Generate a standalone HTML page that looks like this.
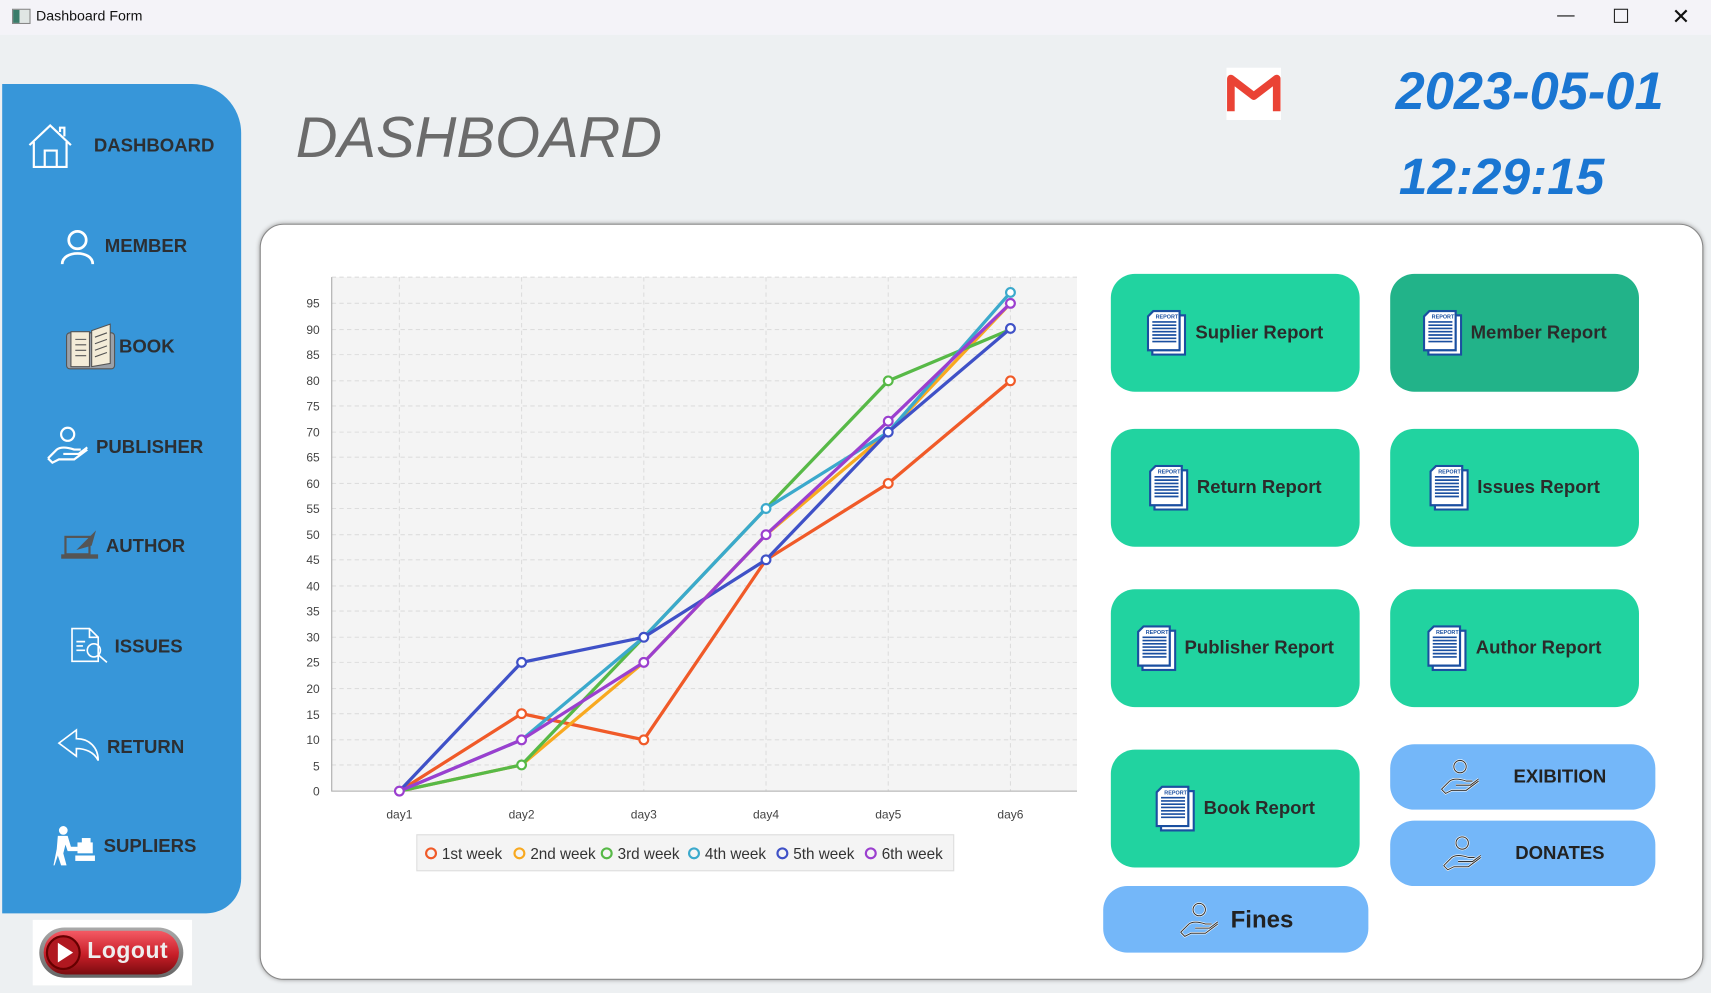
<!DOCTYPE html>
<html><head><meta charset="utf-8"><style>
html,body{margin:0;padding:0;width:1711px;height:993px;overflow:hidden;background:#edf0f2;font-family:"Liberation Sans",sans-serif}
#w{position:absolute;left:0;top:0;width:1568px;height:910px;transform:scale(1.09120);transform-origin:0 0;background:#edf0f2}
.a{position:absolute}
.tb{left:0;top:0;width:1568px;height:32px;background:#f4f3f8;font-size:13px;color:#111}
.side{left:2px;top:77px;width:219px;height:760px;background:#3796d9;border-radius:0 45px 32px 0}
.nav{position:absolute;font-weight:bold;font-size:17px;color:#2c2f33}
.btn{position:absolute;width:228px;height:108px;border-radius:22px;background:#21d3a0;font-weight:bold;font-size:17px;color:#2b2b2b;display:flex;align-items:center;justify-content:center;gap:8px}
.bb{position:absolute;width:243px;height:60px;border-radius:22px;background:#74b7f9;font-weight:bold;font-size:17px;color:#222;display:flex;align-items:center;justify-content:center;gap:30px}
</style></head><body><div id="w">
<div class="a tb"><div class="a" style="left:11px;top:8px;width:15px;height:12px;border:1px solid #888;background:linear-gradient(90deg,#3a7c6a 40%,#e0e6e4 40%)"></div><div class="a" style="left:33px;top:7px">Dashboard Form</div>
<div class="a" style="left:1427px;top:6px;font-size:16px">&#8212;</div><div class="a" style="left:1479px;top:8px;width:11px;height:11px;border:1.3px solid #222"></div><div class="a" style="left:1532px;top:3px;font-size:20px">&#10005;</div></div>

<div class="a side"></div>
<svg class="a" style="left:24px;top:111px" width="44" height="44" viewBox="0 0 44 44" fill="none" stroke="#fff" stroke-width="2"><path d="M3 22 L22 4 L41 22 M7 19 V42 H37 V19 M17 42 V27 H28 V42 M31 10 V6 H35 V14"/></svg>
<div class="nav" style="left:86px;top:124px">DASHBOARD</div>
<svg class="a" style="left:55px;top:209px" width="32" height="34" viewBox="0 0 32 34" fill="none" stroke="#fff" stroke-width="2.5"><circle cx="16" cy="11" r="8"/><path d="M2 33 C2 20 30 20 30 33"/></svg>
<div class="nav" style="left:96px;top:216px">MEMBER</div>
<svg class="a" style="left:60px;top:295px" width="46" height="46" viewBox="0 0 46 46"><rect x="1" y="10" width="44" height="33" rx="3" fill="#9aa0a8" stroke="#555"/><path d="M5 9 H22 V41 H5Z" fill="#f3ecd8" stroke="#555"/><path d="M24 8 L41 2 V38 L24 41Z" fill="#f3ecd8" stroke="#555"/><g stroke="#555"><path d="M9 16H19M9 21H19M9 26H19M9 31H19M27 14L38 10M27 20L38 16M27 26L38 22M27 32L38 28"/></g></svg>
<div class="nav" style="left:109px;top:308px">BOOK</div>
<svg class="a" style="left:42px;top:390px" width="40" height="36" viewBox="0 0 40 36" fill="none" stroke="#fff" stroke-width="2"><circle cx="20" cy="8" r="6"/><path d="M2 30 L10 22 C14 19 20 20 26 22 H32 M16 26 H30 L38 20 M2 30 L6 34 L12 31 H26 L38 22"/></svg>
<div class="nav" style="left:88px;top:400px">PUBLISHER</div>
<svg class="a" style="left:56px;top:484px" width="34" height="30" viewBox="0 0 34 30"><rect x="4" y="8" width="22" height="16" fill="none" stroke="#555" stroke-width="2"/><rect x="0" y="24" width="34" height="4" fill="#555"/><path d="M14 20 L32 2 L28 16Z" fill="#555"/></svg>
<div class="nav" style="left:97px;top:491px">AUTHOR</div>
<svg class="a" style="left:64px;top:574px" width="36" height="36" viewBox="0 0 36 36" fill="none" stroke="#fff" stroke-width="1.5"><path d="M2 2 H18 L26 10 V32 H2Z M18 2 V10 H26 M6 14 H14 M6 18 H12 M6 22 H14"/><circle cx="22" cy="22" r="6"/><path d="M26 26 L34 33"/></svg>
<div class="nav" style="left:105px;top:583px">ISSUES</div>
<svg class="a" style="left:52px;top:667px" width="40" height="32" viewBox="0 0 40 32" fill="none" stroke="#fff" stroke-width="1.5"><path d="M2 14 L18 2 V10 C30 10 38 18 38 30 C34 22 26 19 18 19 V26Z"/></svg>
<div class="nav" style="left:98px;top:675px">RETURN</div>
<svg class="a" style="left:49px;top:756px" width="40" height="38" viewBox="0 0 40 38" fill="#fff"><circle cx="9" cy="5" r="4"/><path d="M4 10 H13 L16 20 H22 V24 H13 L11 18 L9 26 L12 37 H7 L4 28 L1 37 H0 L3 22Z"/><rect x="22" y="16" width="14" height="10"/><rect x="26" y="12" width="8" height="6"/><rect x="20" y="28" width="18" height="5"/></svg>
<div class="nav" style="left:95px;top:766px">SUPLIERS</div>

<div class="a" style="left:30px;top:843px;width:146px;height:60px;background:#fff"></div>
<div class="a" style="left:36px;top:850px;width:132px;height:46px;border-radius:24px;background:linear-gradient(#aaa,#666);"></div>
<div class="a" style="left:40px;top:853px;width:124px;height:40px;border-radius:20px;background:linear-gradient(#f45a64,#c81e28 55%,#7a0c10)"></div>
<svg class="a" style="left:40px;top:855px" width="36" height="36" viewBox="0 0 36 36"><circle cx="18" cy="18" r="15" fill="#b01820" stroke="#600" stroke-width="2"/><path d="M13 9 L27 18 L13 27Z" fill="#fff"/></svg>
<div class="a" style="left:80px;top:860px;font-size:21px;font-weight:bold;color:#eee;letter-spacing:0.5px">Logout</div>

<div class="a" style="left:271px;top:96px;font-size:53px;font-style:italic;color:#6b6b6b">DASHBOARD</div>
<svg class="a" style="left:1124px;top:62px" width="50" height="48" viewBox="0 0 50 48"><rect width="50" height="48" fill="#fff"/><path d="M4 40 V10 L25 26 L46 10 V40" fill="none" stroke="#ea4335" stroke-width="7" stroke-linejoin="round"/></svg>
<div class="a" style="left:1279px;top:57px;font-size:48px;font-weight:bold;font-style:italic;color:#1a76d2">2023-05-01</div>
<div class="a" style="left:1282px;top:134px;font-size:47px;font-weight:bold;font-style:italic;color:#1a76d2">12:29:15</div>

<div class="a" style="left:238px;top:205px;width:1321px;height:691px;background:#fff;border-radius:22px;border:1.5px solid #888;box-shadow:0 0 4px #999"></div>

<svg class="a" style="left:260px;top:240px" width="740" height="570" viewBox="260 240 740 570" font-family="Liberation Sans" font-size="11" fill="#444">
<rect x="304" y="254" width="683" height="471" fill="#f4f4f4"/>
<g stroke="#ddd" stroke-dasharray="4 3">
<path d="M304 254H987M304 278H987M304 302H987M304 325H987M304 349H987M304 372H987M304 396H987M304 419H987M304 443H987M304 466H987M304 490H987M304 513H987M304 537H987M304 560H987M304 584H987M304 607H987M304 631H987M304 654H987M304 678H987M304 701H987"/>
<path d="M366 254V725M478 254V725M590 254V725M702 254V725M814 254V725M926 254V725"/></g>
<path d="M304 254V725H987" stroke="#aaa" fill="none"/>
<g text-anchor="end"><text x="293" y="729">0</text><text x="293" y="706">5</text><text x="293" y="682">10</text><text x="293" y="659">15</text><text x="293" y="635">20</text><text x="293" y="611">25</text><text x="293" y="588">30</text><text x="293" y="564">35</text><text x="293" y="541">40</text><text x="293" y="517">45</text><text x="293" y="494">50</text><text x="293" y="470">55</text><text x="293" y="447">60</text><text x="293" y="423">65</text><text x="293" y="400">70</text><text x="293" y="376">75</text><text x="293" y="353">80</text><text x="293" y="329">85</text><text x="293" y="306">90</text><text x="293" y="282">95</text></g>
<g text-anchor="middle"><text x="366" y="750">day1</text><text x="478" y="750">day2</text><text x="590" y="750">day3</text><text x="702" y="750">day4</text><text x="814" y="750">day5</text><text x="926" y="750">day6</text></g>
<g fill="none" stroke-width="3">
<polyline stroke="#f05a28" points="366,725 478,654 590,678 702,513 814,443 926,349"/>
<polyline stroke="#f8a920" points="366,725 478,701 590,607 702,490 814,396 926,278"/>
<polyline stroke="#57b947" points="366,725 478,701 590,584 702,466 814,349 926,302"/>
<polyline stroke="#3ba9cc" points="366,725 478,678 590,584 702,466 814,396 926,268"/>
<polyline stroke="#3f51c7" points="366,725 478,607 590,584 702,513 814,396 926,301"/>
<polyline stroke="#9b3fcf" points="366,725 478,678 590,607 702,490 814,386 926,278"/>
</g>
<g fill="#fff" stroke-width="2">
<g stroke="#f05a28"><circle cx="478" cy="654" r="4"/><circle cx="590" cy="678" r="4"/><circle cx="814" cy="443" r="4"/><circle cx="926" cy="349" r="4"/></g>
<g stroke="#57b947"><circle cx="478" cy="701" r="4"/><circle cx="814" cy="349" r="4"/></g>
<g stroke="#3ba9cc"><circle cx="702" cy="466" r="4"/><circle cx="926" cy="268" r="4"/></g>
<g stroke="#3f51c7"><circle cx="478" cy="607" r="4"/><circle cx="590" cy="584" r="4"/><circle cx="702" cy="513" r="4"/><circle cx="814" cy="396" r="4"/><circle cx="926" cy="301" r="4"/></g>
<g stroke="#9b3fcf"><circle cx="366" cy="725" r="4"/><circle cx="478" cy="678" r="4"/><circle cx="590" cy="607" r="4"/><circle cx="702" cy="490" r="4"/><circle cx="814" cy="386" r="4"/><circle cx="926" cy="278" r="4"/></g>
</g>
<rect x="382" y="765" width="492" height="33" fill="#f4f4f4" stroke="#ddd"/>
<g font-size="14" fill="#333" stroke-width="2">
<circle cx="395" cy="782" r="4.5" fill="none" stroke="#f05a28"/><text x="405" y="787">1st week</text>
<circle cx="476" cy="782" r="4.5" fill="none" stroke="#f8a920"/><text x="486" y="787">2nd week</text>
<circle cx="556" cy="782" r="4.5" fill="none" stroke="#57b947"/><text x="566" y="787">3rd week</text>
<circle cx="636" cy="782" r="4.5" fill="none" stroke="#3ba9cc"/><text x="646" y="787">4th week</text>
<circle cx="717" cy="782" r="4.5" fill="none" stroke="#3f51c7"/><text x="727" y="787">5th week</text>
<circle cx="798" cy="782" r="4.5" fill="none" stroke="#9b3fcf"/><text x="808" y="787">6th week</text>
</g></svg>

<svg width="0" height="0" style="position:absolute"><defs><symbol id="d" viewBox="0 0 36 42"><rect x="5" y="5" width="30" height="36" fill="#fff" stroke="#1a4fa0" stroke-width="2"/><path d="M6 1 H30 V37 H1 V6Z" fill="#fff" stroke="#1a4fa0" stroke-width="2"/><g stroke="#1a4fa0" stroke-width="1.5"><path d="M5 11H27M5 14H27M5 17H27M5 20H27M5 23H27M5 26H27M5 29H27"/></g><text x="8" y="8" font-size="5" fill="#1a4fa0" font-family="Liberation Sans">REPORT</text></symbol>
<symbol id="h" viewBox="0 0 40 36"><g fill="none" stroke="#fff" stroke-width="2.2"><circle cx="20" cy="8" r="6"/><path d="M2 30 L10 22 C14 19 20 20 26 22 H32 M16 26 H30 L38 20 M2 30 L6 34 L12 31 H26 L38 22"/></g><g fill="none" stroke="#333" stroke-width="1"><circle cx="20" cy="8" r="6"/><path d="M2 30 L10 22 C14 19 20 20 26 22 H32 M16 26 H30 L38 20 M2 30 L6 34 L12 31 H26 L38 22"/></g></symbol></defs></svg>

<div class="btn" style="left:1018px;top:251px"><svg width="36" height="42"><use href="#d"/></svg>Suplier Report</div>
<div class="btn" style="left:1274px;top:251px;background:#22b389"><svg width="36" height="42"><use href="#d"/></svg>Member Report</div>
<div class="btn" style="left:1018px;top:393px"><svg width="36" height="42"><use href="#d"/></svg>Return Report</div>
<div class="btn" style="left:1274px;top:393px"><svg width="36" height="42"><use href="#d"/></svg>Issues Report</div>
<div class="btn" style="left:1018px;top:540px"><svg width="36" height="42"><use href="#d"/></svg>Publisher Report</div>
<div class="btn" style="left:1274px;top:540px"><svg width="36" height="42"><use href="#d"/></svg>Author Report</div>
<div class="btn" style="left:1018px;top:687px"><svg width="36" height="42"><use href="#d"/></svg>Book Report</div>
<div class="bb" style="left:1274px;top:682px"><svg width="38" height="34"><use href="#h"/></svg>EXIBITION</div>
<div class="bb" style="left:1274px;top:752px"><svg width="38" height="34"><use href="#h"/></svg>DONATES</div>
<div class="bb" style="left:1011px;top:812px;height:61px;font-size:22px;gap:10px"><svg width="38" height="34"><use href="#h"/></svg>Fines</div>
</div></body></html>
